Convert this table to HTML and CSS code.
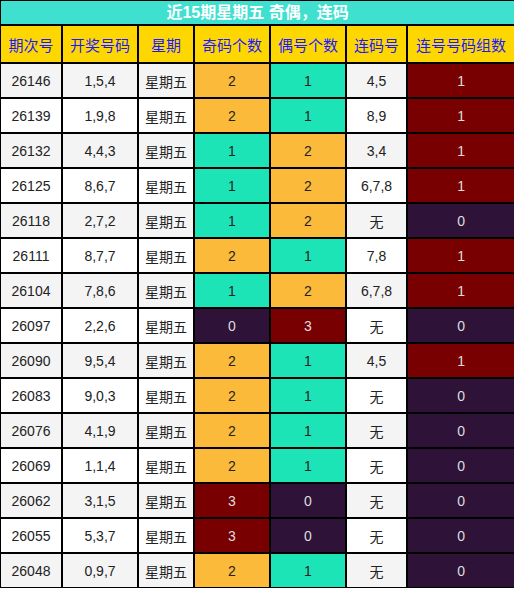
FILE: index.html
```html
<!DOCTYPE html>
<html lang="zh">
<head>
<meta charset="utf-8">
<link rel="stylesheet" href="styles.css">
</head>
<body>
<table class="tbl">
<colgroup>
<col class="c1"><col class="c2"><col class="c3"><col class="c4"><col class="c5"><col class="c6"><col class="c7">
</colgroup>
<thead>
<tr><th colspan="7" class="title">近15期星期五 奇偶，连码</th></tr>
<tr class="head"><th>期次号</th><th>开奖号码</th><th>星期</th><th>奇码个数</th><th>偶号个数</th><th>连码号</th><th>连号号码组数</th></tr>
</thead>
<tbody>
<tr class="g"><td>26146</td><td>1,5,4</td><td>星期五</td><td class="o">2</td><td class="t">1</td><td>4,5</td><td class="r">1</td></tr>
<tr class="w"><td>26139</td><td>1,9,8</td><td>星期五</td><td class="o">2</td><td class="t">1</td><td>8,9</td><td class="r">1</td></tr>
<tr class="g"><td>26132</td><td>4,4,3</td><td>星期五</td><td class="t">1</td><td class="o">2</td><td>3,4</td><td class="r">1</td></tr>
<tr class="w"><td>26125</td><td>8,6,7</td><td>星期五</td><td class="t">1</td><td class="o">2</td><td>6,7,8</td><td class="r">1</td></tr>
<tr class="g"><td>26118</td><td>2,7,2</td><td>星期五</td><td class="t">1</td><td class="o">2</td><td>无</td><td class="p">0</td></tr>
<tr class="w"><td>26111</td><td>8,7,7</td><td>星期五</td><td class="o">2</td><td class="t">1</td><td>7,8</td><td class="r">1</td></tr>
<tr class="g"><td>26104</td><td>7,8,6</td><td>星期五</td><td class="t">1</td><td class="o">2</td><td>6,7,8</td><td class="r">1</td></tr>
<tr class="w"><td>26097</td><td>2,2,6</td><td>星期五</td><td class="p">0</td><td class="r">3</td><td>无</td><td class="p">0</td></tr>
<tr class="g"><td>26090</td><td>9,5,4</td><td>星期五</td><td class="o">2</td><td class="t">1</td><td>4,5</td><td class="r">1</td></tr>
<tr class="w"><td>26083</td><td>9,0,3</td><td>星期五</td><td class="o">2</td><td class="t">1</td><td>无</td><td class="p">0</td></tr>
<tr class="g"><td>26076</td><td>4,1,9</td><td>星期五</td><td class="o">2</td><td class="t">1</td><td>无</td><td class="p">0</td></tr>
<tr class="w"><td>26069</td><td>1,1,4</td><td>星期五</td><td class="o">2</td><td class="t">1</td><td>无</td><td class="p">0</td></tr>
<tr class="g"><td>26062</td><td>3,1,5</td><td>星期五</td><td class="r">3</td><td class="p">0</td><td>无</td><td class="p">0</td></tr>
<tr class="w"><td>26055</td><td>5,3,7</td><td>星期五</td><td class="r">3</td><td class="p">0</td><td>无</td><td class="p">0</td></tr>
<tr class="g"><td>26048</td><td>0,9,7</td><td>星期五</td><td class="o">2</td><td class="t">1</td><td>无</td><td class="p">0</td></tr>
</tbody>
</table>
</body>
</html>
```
FILE: styles.css
```css
html, body {
  margin: 0;
  padding: 0;
  background: #fff;
}
.tbl {
  border-collapse: separate;
  border-spacing: 0;
  table-layout: fixed;
  width: 515px;
  font-family: "Liberation Sans", "Noto Sans CJK SC", sans-serif;
}
.c1 { width: 62px; }
.c2 { width: 76px; }
.c3 { width: 56px; }
.c4 { width: 76px; }
.c5 { width: 76px; }
.c6 { width: 61px; }
.c7 { width: 108px; }
.tbl th, .tbl td {
  border: 1px solid #000;
  padding: 0;
  text-align: center;
  box-sizing: border-box;
  overflow: hidden;
  white-space: nowrap;
}
.title {
  height: 25px;
  background: #40e0d0;
  color: #fff;
  font-size: 16px;
  font-weight: bold;
  line-height: 23px;
}
.head th {
  height: 38px;
  background: #ffd700;
  color: #1a1aff;
  font-size: 15px;
  font-weight: normal;
  font-family: "Noto Sans CJK SC", sans-serif;
}
.tbl td {
  height: 35px;
  font-size: 14px;
  color: #222;
}
.g td { background: #f4f4f4; }
.w td { background: #fff; }
.tbl td.o { background: #fbba3a; color: #222; }
.tbl td.t { background: #1de4b6; color: #222; }
.tbl td.r { background: #780000; color: #ddd; }
.tbl td.p { background: #2e1237; color: #ddd; }
```
